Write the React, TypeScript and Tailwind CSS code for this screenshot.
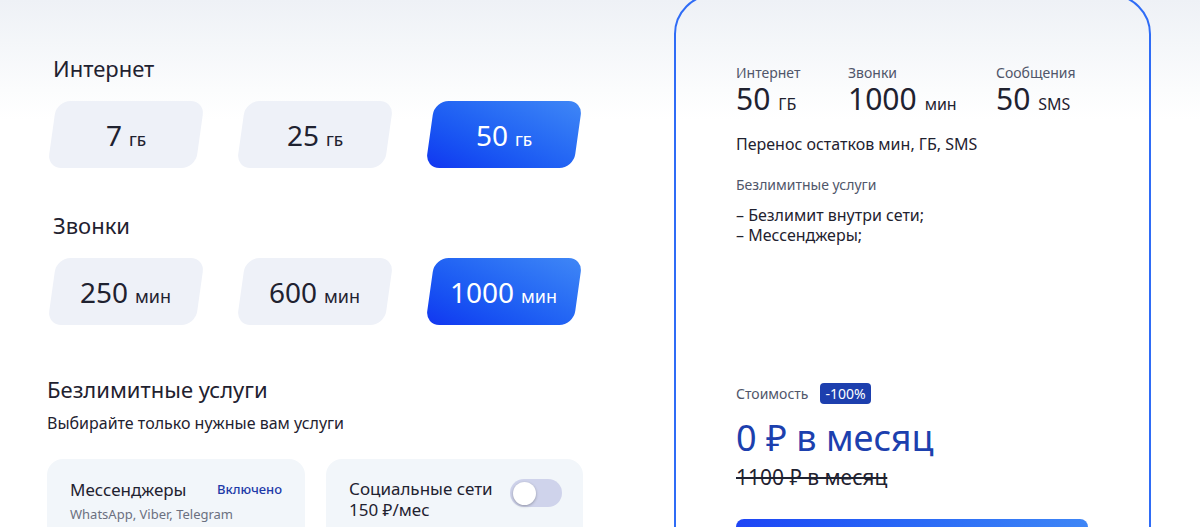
import React, { useState } from 'react';

const FONT = { fontFamily: '"Noto Sans", "Open Sans", sans-serif' };

interface OptionProps {
    value: string;
    unit: string;
    active?: boolean;
    unitClass?: string;
}

function Option({ value, unit, active, unitClass }: OptionProps) {
    return (
        <button
            className={
                'flex h-[67px] w-[148px] -skew-x-[8deg] items-center justify-center rounded-[14px] ' +
                (active
                    ? 'bg-linear-to-tr from-[#1334f0] to-[#4087f6] text-white'
                    : 'bg-[#eef1f8] text-[#1f2230]')
            }
        >
            <span className="flex skew-x-[8deg] items-baseline gap-[7px]">
                <span className="text-[28px] leading-none">{value}</span>
                <span className={unitClass ?? 'text-[15px] font-medium leading-none'}>{unit}</span>
            </span>
        </button>
    );
}

function Stat({ label, value, unit, w }: { label: string; value: string; unit: string; w: string }) {
    return (
        <div className={w}>
            <div className="text-[14px] leading-[18px] text-[#50566a]">{label}</div>
            <div className="mt-[2px] flex items-baseline gap-[8px] text-[#1f2230]">
                <span className="text-[30px] leading-[30px]">{value}</span>
                <span className="text-[16px] leading-[20px]">{unit}</span>
            </div>
        </div>
    );
}

export default function App() {
    const [social, setSocial] = useState(false);

    return (
        <div
            style={FONT}
            className="h-[527px] w-full overflow-hidden bg-[linear-gradient(180deg,#eef1f6_0px,#fbfcfd_90px,#ffffff_120px)] text-[#1f2230]"
        >
            <div className="flex pl-[47px]">
                {/* Tariff builder */}
                <div className="w-[536px] shrink-0 pt-[54px]">
                    <h2 className="ml-[6px] text-[22px] leading-[28px]">Интернет</h2>
                    <div className="mt-[19px] flex gap-[41px] pl-[5px]">
                        <Option value="7" unit="ГБ" />
                        <Option value="25" unit="ГБ" />
                        <Option value="50" unit="ГБ" active />
                    </div>

                    <h2 className="ml-[6px] mt-[43px] text-[22px] leading-[28px]">Звонки</h2>
                    <div className="mt-[19px] flex gap-[41px] pl-[5px]">
                        <Option value="250" unit="мин" unitClass="text-[18px] leading-none" />
                        <Option value="600" unit="мин" unitClass="text-[18px] leading-none" />
                        <Option value="1000" unit="мин" unitClass="text-[18px] leading-none" active />
                    </div>

                    <h2 className="mt-[50px] text-[22px] leading-[28px]">Безлимитные услуги</h2>
                    <p className="mt-[8px] text-[16px] leading-[24px]">Выбирайте только нужные вам услуги</p>

                    <div className="mt-[24px] flex gap-[21px]">
                        <div className="h-[110px] w-[258px] rounded-[16px] bg-[#f2f6fa] px-[23px] pt-[19px]">
                            <div className="flex items-center justify-between">
                                <span className="text-[17px] leading-[24px]">Мессенджеры</span>
                                <span className="text-[13px] font-medium text-[#1e3aa8]">Включено</span>
                            </div>
                            <div className="mt-[3px] text-[13px] leading-[18px] text-[#6b7080]">
                                WhatsApp, Viber, Telegram
                            </div>
                        </div>
                        <div className="flex h-[110px] w-[257px] items-start justify-between rounded-[16px] bg-[#f2f6fa] pl-[23px] pr-[21px] pt-[19px]">
                            <div className="text-[17px] leading-[21px]">
                                <div>Социальные сети</div>
                                <div>150 ₽/мес</div>
                            </div>
                            <button
                                onClick={() => setSocial(!social)}
                                className={
                                    'mt-[1px] flex h-[28px] w-[52px] items-center rounded-full px-[3px] ' +
                                    (social ? 'justify-end bg-[#2b5cf5]' : 'justify-start bg-[#cfd3eb]')
                                }
                            >
                                <span className="h-[23px] w-[23px] rounded-full bg-white shadow-[0_1px_3px_rgba(0,0,0,0.3)]" />
                            </button>
                        </div>
                    </div>
                </div>

                {/* Summary card */}
                <div className="ml-[91px] -mt-[6px] h-[600px] w-[477px] shrink-0 rounded-[40px] border-2 border-[#2f6cf6] pl-[60px] pr-[61px] pt-[68px]">
                    <div className="flex">
                        <Stat label="Интернет" value="50" unit="ГБ" w="w-[112px]" />
                        <Stat label="Звонки" value="1000" unit="мин" w="w-[148px]" />
                        <Stat label="Сообщения" value="50" unit="SMS" w="w-[92px]" />
                    </div>

                    <p className="mt-[18px] text-[16px] leading-[24px]">Перенос остатков мин, ГБ, SMS</p>

                    <div className="mt-[19px] text-[14px] leading-[20px] text-[#50566a]">Безлимитные услуги</div>
                    <ul className="mt-[10px] text-[16px] leading-[20px]">
                        <li>– Безлимит внутри сети;</li>
                        <li>– Мессенджеры;</li>
                    </ul>

                    <div className="mt-[138px] flex items-center gap-[12px]">
                        <span className="text-[14px] leading-[20px] text-[#50566a]">Стоимость</span>
                        <span className="rounded-[4px] bg-[#1d3fae] px-[5px] text-[14px] leading-[21px] text-white">-100%</span>
                    </div>
                    <div className="mt-[14px] text-[36px] leading-[40px] text-[#1c40ae]">0 ₽ в месяц</div>
                    <div className="mt-[6px] text-[21px] leading-[26px] line-through">1100 ₽ в месяц</div>

                    <button className="mt-[29px] h-[52px] w-[352px] rounded-[8px] bg-linear-to-r from-[#1e44f5] to-[#3f86f6] text-[16px] text-white">
                        Подключить
                    </button>
                </div>
            </div>
        </div>
    );
}
